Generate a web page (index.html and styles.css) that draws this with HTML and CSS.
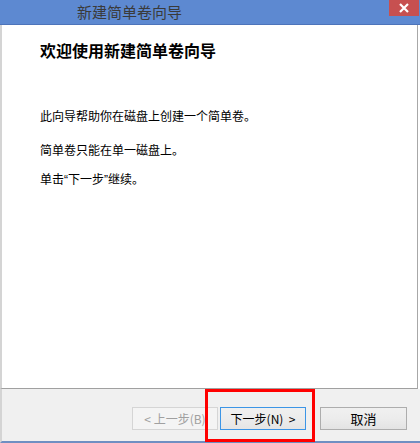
FILE: index.html
```html
<!DOCTYPE html>
<html lang="zh">
<head>
<meta charset="utf-8">
<link rel="stylesheet" href="styles.css">
</head>
<body>
<div class="window">
  <div class="titlebar">
    <span class="title">新建简单卷向导</span>
    <div class="close">
      <svg width="12" height="10" viewBox="0 0 12 10"><path d="M2 1 L10 9 M10 1 L2 9" stroke="#fff" stroke-width="2.2" fill="none"/></svg>
    </div>
  </div>
  <div class="content">
    <h1 class="heading">欢迎使用新建简单卷向导</h1>
    <p class="line line1">此向导帮助你在磁盘上创建一个简单卷。</p>
    <p class="line line2">简单卷只能在单一磁盘上。</p>
    <p class="line line3">单击<span class="quote">“</span>下一步<span class="quote">”</span>继续。</p>
  </div>
  <div class="footer">
    <button class="btn btn-disabled">&lt; 上一步(B)</button>
    <button class="btn btn-default">下一步(N)&nbsp; &gt;</button>
    <button class="btn btn-cancel">取消</button>
  </div>
  <div class="highlight"></div>
</div>
</body>
</html>
```
FILE: styles.css
```css
html, body {
  margin: 0;
  padding: 0;
  background: #ffffff;
}
.window {
  position: relative;
  width: 420px;
  height: 443px;
  display: flex;
  flex-direction: column;
  font-family: "Noto Sans CJK SC", "Noto Sans", sans-serif;
  overflow: hidden;
}
.titlebar {
  height: 24px;
  background: #5d89d1;
  border-bottom: 1px solid #4d74ba;
  display: flex;
  align-items: flex-start;
  justify-content: space-between;
  flex-shrink: 0;
}
.title {
  margin-left: 77px;
  margin-top: 2px;
  font-size: 15px;
  line-height: 20px;
  color: #3a3a3a;
}
.close {
  width: 30px;
  height: 16px;
  margin-right: 1px;
  background: #c75050;
  display: flex;
  align-items: center;
  justify-content: center;
}
.close svg { display: block; }
.content {
  flex: 1;
  background: #ffffff;
  border-left: 2px solid #d4d4d4;
  border-right: 1px solid #a8a8a8;
  margin-right: 2px;
  border-bottom: 1px solid #a0a0a0;
  padding: 15px 0 0 38px;
}
.heading {
  margin: 0;
  font-size: 16px;
  line-height: 20px;
  font-weight: bold;
  color: #000;
}
.line {
  margin: 0;
  font-size: 12px;
  line-height: 16px;
  color: #000;
}
.quote {
  font-family: "Liberation Sans", "DejaVu Sans", sans-serif;
}
.line1 { margin-top: 48px; }
.line2 { margin-top: 18px; }
.line3 { margin-top: 13px; }
.footer {
  flex-shrink: 0;
  background: #f0f0f0;
  border-left: 2px solid #d4d4d4;
  border-bottom: 2px solid #6f8fc2;
  display: flex;
  align-items: flex-start;
  padding: 18px 0 0 130px;
  box-sizing: border-box;
  height: 54px;
}
.btn {
  width: 86px;
  height: 23px;
  margin: 0;
  padding: 0;
  font-family: "Noto Sans CJK SC", "Noto Sans", sans-serif;
  font-size: 12px;
  line-height: 20px;
  box-sizing: border-box;
  background: linear-gradient(#f0f0f0 0%, #ececec 50%, #e3e3e3 100%);
  border: 1px solid #adadad;
  color: #000;
}
.btn-disabled {
  color: #a0a0a0;
  border-color: #d5d5d5;
  background: #f4f4f4;
}
.btn-default {
  margin-left: 2px;
  border-color: #3c95e6;
  background: linear-gradient(#f0f0f0 0%, #ececec 50%, #e5e5e5 100%);
}
.btn-cancel {
  margin-left: 14px;
  width: 87px;
  font-size: 13px;
}
.highlight {
  position: absolute;
  left: 205px;
  top: 389px;
  width: 110px;
  height: 53px;
  box-sizing: border-box;
  border: 3px solid #ff0000;
}
```
